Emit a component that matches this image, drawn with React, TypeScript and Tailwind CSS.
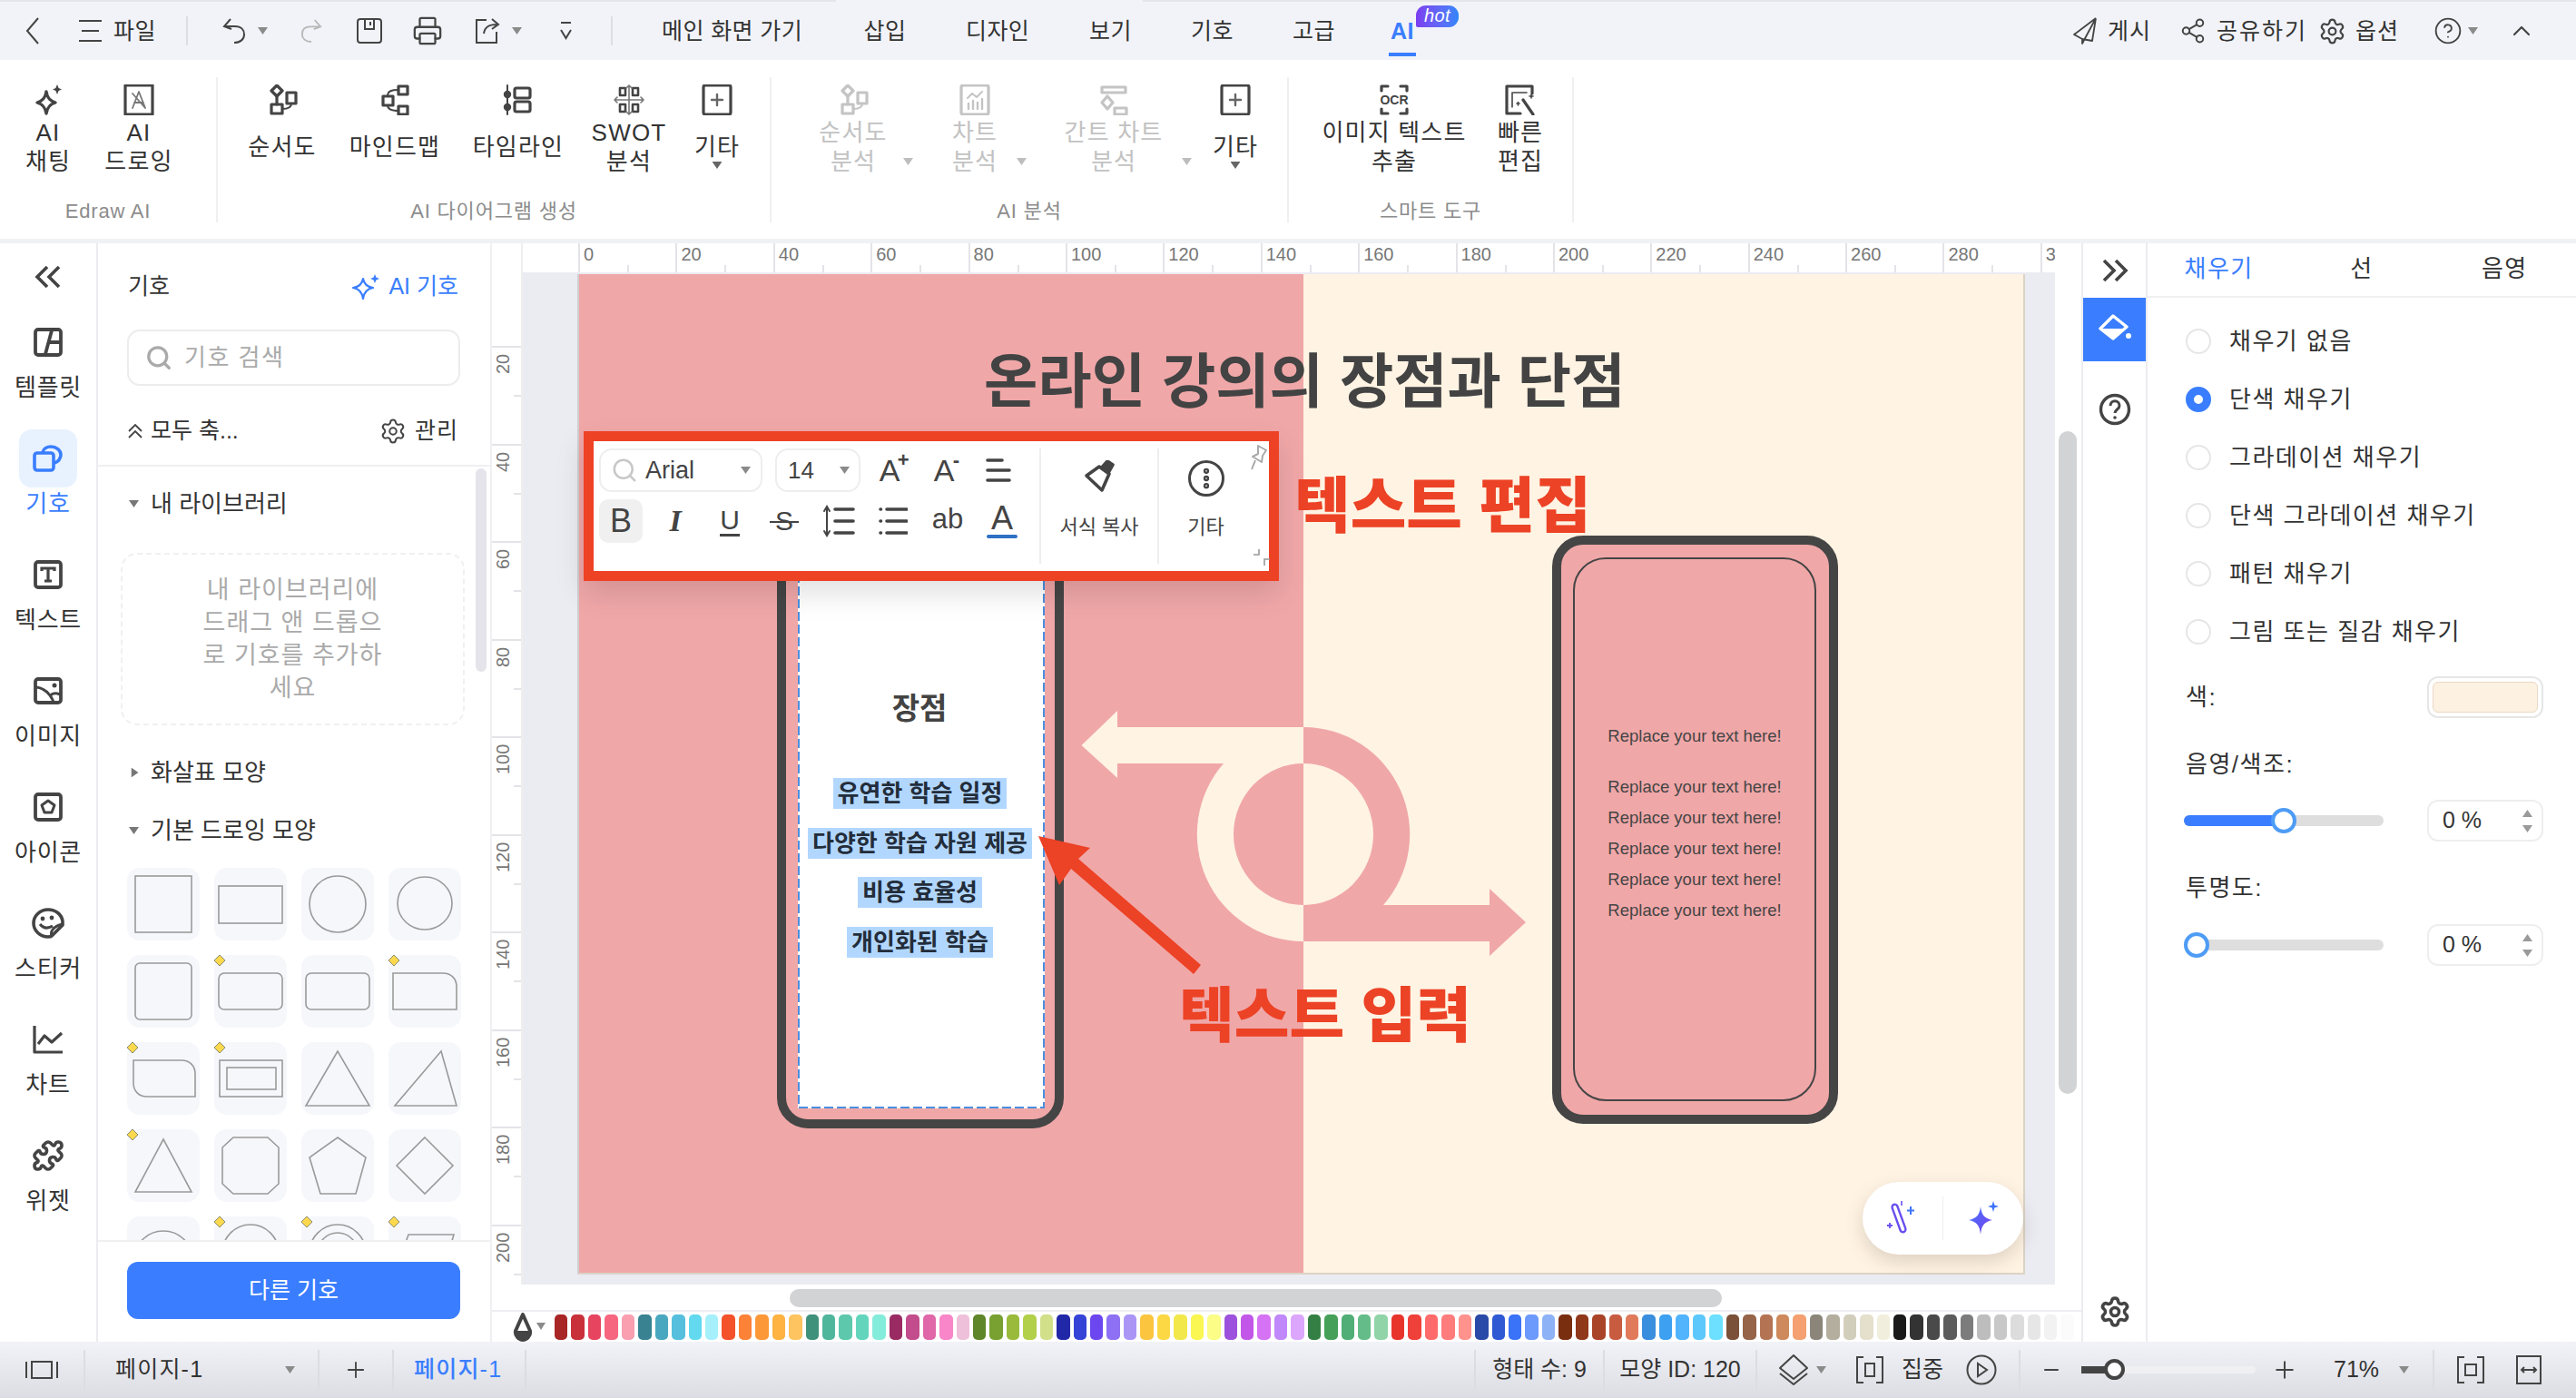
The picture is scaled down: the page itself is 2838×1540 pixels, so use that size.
import { Printer, Puzzle, Search, Settings, Share2, ChevronUp, Plus, Minus, CircleHelp, Ellipsis } from 'lucide-react'
import type { ReactNode } from 'react'

const INK = '#444444'
const GRAY = '#c4c4c4'

const swatches = [
  '#a92626', '#c9313a', '#e6445f', '#f7667f', '#f99fb0',
  '#388292', '#4aa7c0', '#56bfde', '#62d9ef', '#a6f0fb',
  '#f4522a', '#fb8236', '#fd9838', '#feb342', '#fec45f',
  '#40917c', '#4fb69c', '#5ec8ad', '#63d5bd', '#84ecda',
  '#9a2b62', '#c34c8c', '#e068a8', '#f986c8', '#efc0da',
  '#5f8629', '#78a132', '#9aba3c', '#b2d04a', '#d2e08a',
  '#2128a8', '#3544d6', '#6c46ee', '#8d70f3', '#ab96f6',
  '#fcc540', '#fcd844', '#f2e84c', '#faf652', '#fbfd86',
  '#9c52dc', '#c256e8', '#d672f4', '#c088fa', '#dca6fc',
  '#348044', '#46a058', '#50ae76', '#64bc88', '#90d4a8',
  '#e8352c', '#f0403a', '#ff6a6a', '#ff7c7c', '#ff928c',
  '#2a4aa8', '#2f5ad4', '#3a72f8', '#6c9afc', '#8eb2f6',
  '#7a2e10', '#90381a', '#aa4428', '#c85c40', '#e07a5a',
  '#3a8ede', '#3ea0f0', '#52b4fc', '#5cc8fc', '#6ce0fe',
  '#7a5038', '#966448', '#b47454', '#ce8a5c', '#f4a070',
  '#8c857a', '#b4ae9e', '#d2cebc', '#e4e0cc', '#f2eedd',
  '#1a1a1a', '#333333', '#4a4a4a', '#5c5c5c', '#7c7c7c', '#bdbdbd', '#c8c8c8', '#dcdcdc', '#e6e6e6', '#f2f2f2', '#fbfbfb',
]

function Caret({ className = '', color = '#8a8a8a' }: { className?: string; color?: string }) {
  return (
    <svg width="11" height="8" viewBox="0 0 11 8" className={className}>
      <path d="M0 0 H11 L5.5 8 Z" fill={color} />
    </svg>
  )
}

function Ico({ children, size = 34, className = '' }: { children: ReactNode; size?: number; className?: string }) {
  return (
    <svg width={size} height={size} viewBox="0 0 34 34" fill="none" stroke={INK} strokeWidth="3.2" strokeLinecap="round" strokeLinejoin="round" className={className}>
      {children}
    </svg>
  )
}

function FlowIcon({ color = INK }: { color?: string }) {
  return (
    <Ico>
      <g stroke={color}>
        <path d="M11 1 L17 7 L11 13 L5 7 Z" />
        <path d="M11 13 V22" />
        <rect x="5" y="22" width="12" height="10" />
        <rect x="22" y="9" width="10" height="12" />
        <path d="M27 21 C27 26 22 27 17 27" strokeWidth="2" />
      </g>
    </Ico>
  )
}

function RibbonItem({ className, icon, lines, off, caret, below }: { className: string; icon: ReactNode; lines: string[]; off?: boolean; caret?: string; below?: boolean }) {
  return (
    <div className={`${className} flex flex-col items-center`}>
      <div className="h-[33px] flex items-center justify-center">{icon}</div>
      <div className={`mt-[4px] h-[64px] flex flex-col items-center justify-center leading-[32px] text-[26px] tracking-[1.2px] whitespace-nowrap ${off ? 'text-[#c2c2c2]' : 'text-[#333]'}`}>
        {lines.map((l, i) => (
          <span key={l} className="relative">
            {l}
            {caret && i === lines.length - 1 && <Caret className={`absolute left-full top-[12px] ${caret}`} color="#bdbdbd" />}
            {below && <Caret className="absolute left-1/2 -translate-x-1/2 top-[32px]" color="#666" />}
          </span>
        ))}
      </div>
    </div>
  )
}

function RibbonGroup({ className, label, children }: { className: string; label: string; children: ReactNode }) {
  return (
    <div className={`${className} h-[160px] mt-[19px] pt-[8px] border-r-2 border-[#f0f0f2] flex flex-col`}>
      <div className="flex h-[101px]">{children}</div>
      <div className="mt-[27px] h-[24px] leading-[24px] text-center text-[22px] tracking-[0.8px] text-[#8c8c8c]">{label}</div>
    </div>
  )
}

function NavItem({ icon, label, active }: { icon: ReactNode; label: string; active?: boolean }) {
  return (
    <div className="h-[128px] flex flex-col items-center">
      <div className={`w-[64px] h-[64px] rounded-[14px] flex items-center justify-center ${active ? 'bg-[#e8f2ff]' : ''}`}>{icon}</div>
      <div className={`mt-[2px] leading-[32px] text-[26px] tracking-[0.8px] ${active ? 'text-[#3a7eff]' : 'text-[#333]'}`}>{label}</div>
    </div>
  )
}

function Tile({ children, diamond }: { children: ReactNode; diamond?: boolean }) {
  return (
    <div className="h-[80px] rounded-[14px] bg-[#f6f7fb]">
      <svg viewBox="0 0 80 80" width="80" height="80" fill="none" stroke="#9a9a9a" strokeWidth="1.6" className="overflow-visible">
        {children}
        {diamond && <path d="M6 0 L12 6 L6 12 L0 6 Z" fill="#fcd84f" stroke="#8c8c70" strokeWidth="1" />}
      </svg>
    </div>
  )
}

function Radio({ label, on }: { label: string; on?: boolean }) {
  return (
    <div className="h-[64px] flex items-center">
      <div className={`w-[28px] h-[28px] rounded-full bg-white ${on ? 'border-[9px] border-[#3a7eff]' : 'border-2 border-[#e6e6e6]'}`} />
      <span className="ml-[20px] text-[#333]">{label}</span>
    </div>
  )
}

function ValueBox() {
  return (
    <div className="w-[128px] h-[46px] rounded-[12px] border-2 border-[#eeeeee] flex items-center pl-[15px] pr-[10px] text-[25px] tracking-normal text-[#333]">
      <span>0 %</span>
      <div className="ml-auto flex flex-col gap-[9px]">
        <Caret className="rotate-180" color="#9a9a9a" />
        <Caret color="#9a9a9a" />
      </div>
    </div>
  )
}

function Sep() {
  return <div className="w-[2px] h-[44px] bg-[#dcdde2]" />
}

function TextTool({ children, active, className = '' }: { children: ReactNode; active?: boolean; className?: string }) {
  return (
    <div className={`w-[60px] h-[48px] flex items-center justify-center ${className}`}>
      <div className={`w-[48px] h-[48px] rounded-[10px] flex items-center justify-center ${active ? 'bg-[#f0f0f0]' : ''}`}>{children}</div>
    </div>
  )
}

export default function App() {
  const pink = 'bg-[#f0a7a8]'

  return (
    <div className="relative w-[2838px] h-[1540px] overflow-hidden flex flex-col bg-white text-[#333] [font-family:'Liberation_Sans','Noto_Sans_CJK_KR',sans-serif]">

      {/* window top edge */}
      <div className="h-[2px] flex bg-[#e3e5ea]">
        <div className="ml-[921px] w-[338px] bg-[#f2f3f8]" />
      </div>

      {/* title bar */}
      <div className="h-[64px] bg-[#f2f3f8] flex items-center text-[25px] tracking-[0.4px] whitespace-nowrap">
        <svg width="15" height="32" viewBox="0 0 15 32" fill="none" stroke={INK} strokeWidth="2" className="ml-[28px]"><path d="M14 2 L2 16 L14 30" /></svg>
        <svg width="25" height="26" viewBox="0 0 25 26" stroke={INK} strokeWidth="2" className="ml-[44px]"><path d="M0 2 H25 M3 13 H22 M0 24 H25" /></svg>
        <span className="ml-[13px] w-[47px] pt-[2px]">파일</span>
        <div className="ml-[33px] w-[2px] h-[32px] bg-[#dddde2]" />
        <svg width="26" height="30" viewBox="0 0 26 30" fill="none" stroke={INK} strokeWidth="2" className="ml-[38px]"><path d="M9 2 L2 10 L10 13 M2 10 H14 C21 10 24 14 24 19 C24 24 20 28 13 28" /></svg>
        <Caret className="ml-[13px]" />
        <svg width="24" height="30" viewBox="0 0 26 30" fill="none" stroke="#b8b8b8" strokeWidth="2" className="ml-[36px]"><path d="M17 2 L24 10 L16 13 M24 10 H12 C5 10 2 14 2 19 C2 24 6 28 13 28" /></svg>
        <svg width="28" height="30" viewBox="0 0 28 30" fill="none" stroke={INK} strokeWidth="2" className="ml-[38px]"><rect x="1" y="2" width="26" height="26" rx="3" /><path d="M9 2 V13 H19 V2" /><path d="M15 5 V9" /></svg>
        <Printer size={34} strokeWidth={1.6} color={INK} className="ml-[33px]" />
        <svg width="28" height="30" viewBox="0 0 28 30" fill="none" stroke={INK} strokeWidth="2" className="ml-[35px]"><path d="M13 3 H2 V28 H24 V16" /><path d="M10 18 C11 11 15 8 24 8 M19 2 L26 8 L19 13" /></svg>
        <Caret className="ml-[13px]" />
        <svg width="13" height="22" viewBox="0 0 13 22" fill="none" stroke={INK} strokeWidth="2" className="ml-[42px]"><path d="M1 2 H12 M1 10 L6.5 19 L12 10" /></svg>
        <div className="ml-[43px] w-[2px] h-[32px] bg-[#dddde2]" />
        <span className="ml-[54px] w-[155px] pt-[2px] text-center">메인 화면 가기</span>
        <span className="ml-[67px] w-[48px] pt-[2px] text-center">삽입</span>
        <span className="ml-[65px] w-[70px] pt-[2px] text-center">디자인</span>
        <span className="ml-[66px] w-[46px] pt-[2px] text-center">보기</span>
        <span className="ml-[66px] w-[46px] pt-[2px] text-center">기호</span>
        <span className="ml-[66px] w-[46px] pt-[2px] text-center">고급</span>
        <div className="ml-[62px] relative w-[26px] h-full flex items-center justify-center text-[#3a7eff] font-bold">
          <span className="pt-[2px]">AI</span>
          <div className="absolute left-[-2px] right-[-2px] bottom-[4px] h-[4px] bg-[#3a7eff]" />
          <div className="absolute left-[28px] top-[4px] w-[47px] h-[24px] rounded-t-[11px] rounded-br-[11px] rounded-bl-[2px] bg-linear-to-r from-[#7a3cf0] to-[#2f86fb] text-white text-[20px] leading-[23px] italic font-normal text-center">hot</div>
        </div>

        <div className="ml-auto flex items-center pr-[44px]">
          <svg width="27" height="32" viewBox="0 0 27 32" fill="none" stroke={INK} strokeWidth="1.8" strokeLinejoin="round"><path d="M25 2 L1 20 L10 25 M25 2 L10 30 V25 M25 2 L21 27 L10 25" /></svg>
          <span className="ml-[11px] w-[47px] pt-[2px] tracking-[1px]">게시</span>
          <Share2 size={30} strokeWidth={1.6} color={INK} className="ml-[32px]" />
          <span className="ml-[11px] w-[104px] pt-[2px] tracking-[2px]">공유하기</span>
          <Settings size={31} strokeWidth={1.7} color={INK} className="ml-[8px]" />
          <span className="ml-[10px] w-[46px] pt-[2px] tracking-[1px]">옵션</span>
          <CircleHelp size={32} strokeWidth={1.4} color={INK} className="ml-[40px]" />
          <Caret className="ml-[6px]" />
          <ChevronUp size={32} strokeWidth={1.6} color={INK} className="ml-[32px]" />
        </div>
      </div>

      {/* ribbon */}
      <div className="h-[197px] flex bg-white shrink-0">
        <RibbonGroup className="w-[240px]" label="Edraw AI">
          <div className="flex pl-[3px]">
            <RibbonItem className="w-[100px]" lines={['AI', '채팅']} icon={
              <Ico>
                <path d="M15 8 C16 15 19 18 25 20 C19 22 16 25 15 32 C14 25 11 22 5 20 C11 18 14 15 15 8 Z" strokeWidth="3.4" />
                <path d="M27 0 L28.6 4 L32 5.5 L28.6 7 L27 11 L25.4 7 L22 5.5 L25.4 4 Z" fill={INK} stroke="none" />
              </Ico>
            } />
            <RibbonItem className="w-[100px]" lines={['AI', '드로잉']} icon={
              <Ico>
                <rect x="2" y="1" width="30" height="32" strokeWidth="3.2" />
                <path d="M10 26 L17 8 L24 26 M12 20 H22 M10 10 L24 26" strokeWidth="1.8" stroke="#777" />
              </Ico>
            } />
          </div>
        </RibbonGroup>
        <RibbonGroup className="w-[610px]" label="AI 다이어그램 생성">
          <div className="flex pl-[9px]">
            <RibbonItem className="w-[124px]" lines={['순서도']} icon={<FlowIcon />} />
            <RibbonItem className="w-[124px]" lines={['마인드맵']} icon={
              <Ico>
                <rect x="4" y="13" width="11" height="10" />
                <rect x="21" y="2" width="10" height="9" />
                <rect x="21" y="24" width="10" height="9" />
                <path d="M9 13 C9 7 14 6 21 6 M9 23 C9 28 14 29 21 29" strokeWidth="2" />
              </Ico>
            } />
            <RibbonItem className="w-[148px]" lines={['타임라인']} icon={
              <Ico>
                <path d="M5 1 V33" strokeWidth="2" />
                <circle cx="5" cy="11" r="2.6" fill={INK} />
                <circle cx="5" cy="25" r="2.6" fill={INK} />
                <rect x="13" y="4" width="17" height="11" rx="2" />
                <rect x="13" y="19" width="17" height="11" rx="2" />
              </Ico>
            } />
            <RibbonItem className="w-[96px]" lines={['SWOT', '분석']} icon={
              <Ico>
                <rect x="7" y="4" width="6" height="8" strokeWidth="2.6" />
                <rect x="21" y="4" width="6" height="8" strokeWidth="2.6" />
                <rect x="7" y="22" width="6" height="8" strokeWidth="2.6" />
                <rect x="21" y="22" width="6" height="8" strokeWidth="2.6" />
                <path d="M1 17 H33 M17 1 V33 M4 14 L1 17 L4 20 M30 14 L33 17 L30 20 M14 4 L17 1 L20 4 M14 30 L17 33 L20 30" strokeWidth="1.6" stroke="#777" />
              </Ico>
            } />
            <RibbonItem className="w-[98px]" lines={['기타']} below icon={
              <Ico>
                <rect x="2" y="1" width="30" height="32" rx="2" />
                <path d="M17 11 V23 M11 17 H23" strokeWidth="2.4" stroke="#666" />
              </Ico>
            } />
          </div>
        </RibbonGroup>
        <RibbonGroup className="w-[570px]" label="AI 분석">
          <div className="flex pl-[23px]">
            <RibbonItem className="w-[134px]" off caret="ml-[30px]" lines={['순서도', '분석']} icon={<FlowIcon color={GRAY} />} />
            <RibbonItem className="w-[134px]" off caret="ml-[21px]" lines={['차트', '분석']} icon={
              <Ico>
                <g stroke={GRAY}>
                  <rect x="2" y="1" width="30" height="32" rx="2" />
                  <path d="M9 15 L14 10 L19 14 L25 8" strokeWidth="2" />
                  <path d="M10 27 V21 M15 27 V18 M20 27 V20 M25 27 V16" strokeWidth="2.4" />
                </g>
              </Ico>
            } />
            <RibbonItem className="w-[172px]" off caret="ml-[50px]" lines={['간트 차트', '분석']} icon={
              <Ico>
                <g stroke={GRAY}>
                  <path d="M4 9 V3 H30 V9 H4 Z" />
                  <path d="M10 13 L16 20 L10 27 L4 20 Z" />
                  <rect x="18" y="26" width="13" height="7" />
                </g>
              </Ico>
            } />
            <RibbonItem className="w-[96px]" lines={['기타']} below icon={
              <Ico>
                <rect x="2" y="1" width="30" height="32" rx="2" />
                <path d="M17 11 V23 M11 17 H23" strokeWidth="2.4" stroke="#666" />
              </Ico>
            } />
          </div>
        </RibbonGroup>
        <RibbonGroup className="w-[314px]" label="스마트 도구">
          <div className="flex pl-[9px]">
            <RibbonItem className="w-[214px]" lines={['이미지 텍스트', '추출']} icon={
              <Ico>
                <path d="M3 7 V2 H10 M24 2 H31 V7 M3 27 V32 H10 M24 32 H31 V27" />
                <text x="17" y="22" textAnchor="middle" fontSize="14" fontWeight="700" fill={INK} stroke="none" fontFamily="Liberation Sans">OCR</text>
              </Ico>
            } />
            <RibbonItem className="w-[64px]" lines={['빠른', '편집']} icon={
              <Ico>
                <path d="M30 10 V2 H2 V32 H17" />
                <path d="M9 9 H24 M8 9 V25" strokeWidth="1.6" />
                <path d="M20 17 L31 33" strokeWidth="3.2" />
                <path d="M13 21 L16 21 M14.5 19.5 V23 M27 13 H31 M29 11 V15" strokeWidth="1.6" />
              </Ico>
            } />
          </div>
        </RibbonGroup>
      </div>
      <div className="h-[5px] bg-[#f0f1f4] shrink-0" />

      {/* workspace */}
      <div className="flex-1 flex min-h-0">

        {/* left nav */}
        <div className="w-[108px] border-r-2 border-[#ececf0] shrink-0 flex flex-col items-center">
          <svg width="30" height="26" viewBox="0 0 30 26" fill="none" stroke={INK} strokeWidth="3.6" className="mt-[24px] mb-[27px]"><path d="M14 2 L3 13 L14 24 M27 2 L16 13 L27 24" /></svg>
          <div className="flex flex-col items-center">
            <NavItem label="템플릿" icon={
              <svg width="32" height="32" viewBox="0 0 32 32" fill="none" stroke={INK} strokeWidth="3.8"><rect x="2" y="2" width="28" height="28" rx="3" /><path d="M20 3 L13 29 M16 16 H29" /></svg>
            } />
            <NavItem active label="기호" icon={
              <svg width="33" height="30" viewBox="0 0 33 30" fill="none" stroke="#3a7eff" strokeWidth="3.6" strokeLinejoin="round"><rect x="2" y="9" width="21" height="19" rx="3" /><path d="M11 8 C12 4 16 2 20 2 C26 2 31 6 31 11 C31 15 28 19 24 20" /></svg>
            } />
            <NavItem label="텍스트" icon={
              <svg width="32" height="32" viewBox="0 0 32 32" fill="none" stroke={INK} strokeWidth="3.8"><rect x="2" y="2" width="28" height="28" rx="3" /><path d="M9 12 V9 H23 V12 M16 9 V23 M12 23 H20" strokeWidth="3.2" /></svg>
            } />
            <NavItem label="이미지" icon={
              <svg width="32" height="30" viewBox="0 0 32 30" fill="none" stroke={INK} strokeWidth="3.8"><rect x="2" y="2" width="28" height="26" rx="3" /><path d="M3 11 C12 12 18 18 22 27 M18 21 C20 18 24 17 29 19" strokeWidth="3" /><circle cx="23" cy="9" r="2.5" fill={INK} stroke="none" /></svg>
            } />
            <NavItem label="아이콘" icon={
              <svg width="32" height="32" viewBox="0 0 32 32" fill="none" stroke={INK} strokeWidth="3.8" strokeLinejoin="round"><rect x="2" y="2" width="28" height="28" rx="3" /><path d="M16 9 L23 14 L20 22 H12 L9 14 Z" strokeWidth="3" /></svg>
            } />
            <NavItem label="스티커" icon={
              <svg width="36" height="34" viewBox="0 0 36 34" fill="none" stroke={INK} strokeWidth="3.6" strokeLinejoin="round"><path d="M34 15 C33 7 26 2 18 2 C9 2 2 9 2 17 C2 25 9 32 18 32 C20 32 21 32 22 31 L34 19 Z" /><path d="M22 31 C20 26 24 20 34 18 M9 18 C13 23 18 23 23 20" strokeWidth="3" /><circle cx="12" cy="12" r="2.4" fill={INK} stroke="none" /><circle cx="22" cy="11" r="2.4" fill={INK} stroke="none" /></svg>
            } />
            <NavItem label="차트" icon={
              <svg width="34" height="32" viewBox="0 0 34 32" fill="none" stroke={INK} strokeWidth="3.2" strokeLinejoin="round"><path d="M2 1 V30 H33" /><path d="M6 21 L13 12 L21 19 L32 9" /></svg>
            } />
            <NavItem label="위젯" icon={<Puzzle size={36} strokeWidth={2.4} color={INK} />} />
          </div>
        </div>

        {/* symbol panel */}
        <div className="w-[434px] shrink-0 border-r-2 border-[#f0f0f2] flex flex-col">
          <div className="h-[92px] pt-[3px] pl-[33px] pr-[35px] flex items-center justify-between text-[25px]">
            <span>기호</span>
            <div className="flex items-center text-[#3a7eff]">
              <svg width="32" height="28" viewBox="0 0 32 28" fill="none" stroke="#3a7eff" strokeWidth="2.2" strokeLinejoin="round"><path d="M13 5 C14 11 17 14 24 15 C17 16 14 20 13 27 C12 20 9 16 2 15 C9 14 12 11 13 5 Z" /><path d="M26 0 L27.4 3.6 L31 5 L27.4 6.4 L26 10 L24.6 6.4 L21 5 L24.6 3.6 Z" fill="#3a7eff" stroke="none" /></svg>
              <span className="ml-[9px]">AI 기호</span>
            </div>
          </div>
          <div className="mt-[3px] ml-[32px] w-[367px] h-[62px] rounded-[14px] border-2 border-[#ececec] flex items-center pl-[18px] text-[26px] tracking-[1.5px] text-[#aaaaaa]">
            <Search size={30} strokeWidth={2.6} color="#aaaaaa" />
            <span className="ml-[13px]">기호 검색</span>
          </div>
          <div className="h-[89px] pt-[13px] pl-[33px] pr-[35px] flex items-center justify-between border-b-2 border-[#f0f0f2] text-[25px]">
            <div className="flex items-center">
              <svg width="16" height="16" viewBox="0 0 16 16" fill="none" stroke={INK} strokeWidth="1.8"><path d="M1 8 L8 1 L15 8 M1 15 L8 8 L15 15" /></svg>
              <span className="ml-[9px]">모두 축...</span>
            </div>
            <div className="flex items-center">
              <Settings size={30} strokeWidth={1.6} color={INK} />
              <span className="ml-[9px] tracking-[1px]">관리</span>
            </div>
          </div>

          <div className="relative flex-1 min-h-0 overflow-hidden text-[26px]">
            <div className="absolute left-[416px] top-[2px] w-[12px] h-[224px] rounded-full bg-[#e4e4ea]" />
            <div className="h-[82px] pl-[34px] flex items-center">
              <Caret color="#777" />
              <span className="ml-[13px]">내 라이브러리</span>
            </div>
            <div className="mt-[13px] ml-[25px] w-[379px] h-[190px] rounded-[18px] border-2 border-dashed border-[#f0f0f2] flex flex-col items-center justify-center text-[27px] tracking-[1px] leading-[36px] text-[#aaaaaa]">
              <span>내 라이브러리에</span>
              <span>드래그 앤 드롭으</span>
              <span>로 기호를 추가하</span>
              <span>세요</span>
            </div>
            <div className="mt-[36px] h-[32px] pl-[35px] flex items-center">
              <Caret color="#777" className="-rotate-90" />
              <span className="ml-[12px]">화살표 모양</span>
            </div>
            <div className="mt-[32px] h-[32px] pl-[34px] flex items-center">
              <Caret color="#777" />
              <span className="ml-[13px]">기본 드로잉 모양</span>
            </div>
            <div className="mt-[25px] pl-[32px] pr-[32px] grid grid-cols-4 gap-[16px]">
              <Tile><rect x="9" y="9" width="62" height="62" /></Tile>
              <Tile><rect x="5" y="20" width="70" height="41" /></Tile>
              <Tile><ellipse cx="40" cy="40" rx="31" ry="31" /></Tile>
              <Tile><ellipse cx="40" cy="39" rx="30" ry="29" /></Tile>
              <Tile><rect x="9" y="9" width="62" height="62" rx="5" /></Tile>
              <Tile diamond><rect x="5" y="20" width="70" height="40" rx="6" /></Tile>
              <Tile><rect x="5" y="20" width="70" height="40" rx="6" /></Tile>
              <Tile diamond><path d="M5 20 H60 C69 20 75 26 75 35 V60 H5 Z" /></Tile>
              <Tile diamond><path d="M7 20 H60 C69 20 75 26 75 35 V60 H22 C13 60 7 54 7 45 Z" /></Tile>
              <Tile diamond><rect x="6" y="20" width="69" height="40" /><rect x="14" y="28" width="54" height="24" /></Tile>
              <Tile><path d="M40 10 L5 70 H75 Z" /></Tile>
              <Tile><path d="M58 10 L7 70 H75 Z" /></Tile>
              <Tile diamond><path d="M40 11 L9 69 H71 Z" /></Tile>
              <Tile><path d="M21 9 H59 L71 20 V60 L59 71 H21 L9 60 V20 Z" /></Tile>
              <Tile><path d="M40 9 L71 31 L60 71 H21 L9 31 Z" /></Tile>
              <Tile><path d="M40 9 L71 40 L40 71 L9 40 Z" /></Tile>
              <Tile><ellipse cx="40" cy="45" rx="31" ry="29" /></Tile>
              <Tile diamond><ellipse cx="40" cy="40" rx="31" ry="31" /></Tile>
              <Tile diamond><circle cx="40" cy="40" r="31" /><circle cx="40" cy="40" r="22" /></Tile>
              <Tile diamond><path d="M22 20 H72 L60 60 H8 Z" /></Tile>
            </div>
          </div>

          <div className="h-[112px] pt-[22px] border-t-2 border-[#f0f0f2] shrink-0">
            <div className="ml-[32px] w-[367px] h-[63px] rounded-[12px] bg-[#3a7eff] text-white text-[25px] flex items-center justify-center">다른 기호</div>
          </div>
        </div>

        {/* center */}
        <div className="w-[1751px] shrink-0 flex flex-col">
          <div className="flex-1 min-h-0 flex">
            <div className="flex-1 min-w-0 flex flex-col">

              {/* top ruler */}
              <div className="h-[32px] shrink-0 flex overflow-hidden text-[20px] leading-[24px] text-[#777]">
                <div className="w-[34px] shrink-0 border-r-2 border-[#eeeeee]" />
                <div className="w-[61px] shrink-0" />
                {[0, 20, 40, 60, 80, 100, 120, 140, 160, 180, 200, 220, 240, 260, 280, 300].map((n) => (
                  <div key={n} className="relative w-[107.4px] shrink-0 h-full border-l-2 border-[#e4e4e8] pl-[4px]">
                    <span>{n === 300 ? '3' : n}</span>
                    <div className="absolute left-[52px] bottom-0 w-[2px] h-[8px] bg-[#e4e4e8]" />
                  </div>
                ))}
              </div>

              <div className="flex-1 min-h-0 flex">
                {/* left ruler */}
                <div className="w-[34px] shrink-0 overflow-hidden border-r-2 border-[#eeeeee] text-[20px] text-[#777]">
                  <div className="h-[83px] border-b-2 border-[#e4e4e8]" />
                  {[20, 40, 60, 80, 100, 120, 140, 160, 180, 200].map((n) => (
                    <div key={n} className="relative h-[107.5px] border-b-2 border-[#e4e4e8]">
                      <span className="absolute left-0 top-[7px] [writing-mode:vertical-rl] rotate-180 leading-[24px] h-[44px] text-right">{n}</span>
                      <div className="absolute right-0 top-[52px] w-[8px] h-[2px] bg-[#e4e4e8]" />
                    </div>
                  ))}
                </div>

                {/* canvas */}
                <div className="relative flex-1 min-w-0 bg-[#ebebf2] overflow-hidden">
                  <div className="absolute left-[60px] top-[2px] w-[1595px] h-[1102px] border-l-2 border-b-2 border-r-2 border-l-[#cfcfcf] border-b-[#dcd3c8] border-r-[#dcd3c8]">
                    <div className="relative w-[1591px] h-[1100px] flex">
                      <div className={`w-[798px] h-full ${pink}`} />
                      <div className="flex-1 h-full bg-[#fff3e3]" />

                      <div className="absolute left-[446px] top-[83px] leading-[72px] text-[64.5px] font-semibold text-[#434343] whitespace-nowrap">온라인 강의의 장점과 단점</div>

                      {/* left phone */}
                      <div className={`absolute left-[218px] top-[288px] w-[316px] h-[653px] rounded-[34px] border-[10px] border-[#454545] ${pink}`}>
                        <div className="absolute left-[13px] top-[15px] w-[272px] h-[606px] bg-white flex flex-col items-center">
                          <svg width="272" height="606" className="absolute left-0 top-0" fill="none" stroke="#4a8fe0" strokeWidth="2" strokeDasharray="10 4"><rect x="1" y="1" width="270" height="604" /></svg>
                          <div className="mt-[146px] -ml-[4px] h-[40px] leading-[40px] text-[33px] font-bold text-[#434343]">장점</div>
                          <div className="mt-[56px] -ml-[3px] flex flex-col items-center gap-[20.7px] text-[26px] font-bold leading-[34px] text-[#232d3a] whitespace-nowrap">
                            <span className="bg-[#b2d7ff] px-[5px]">유연한 학습 일정</span>
                            <span className="bg-[#b2d7ff] px-[5px]">다양한 학습 자원 제공</span>
                            <span className="bg-[#b2d7ff] px-[5px]">비용 효율성</span>
                            <span className="bg-[#b2d7ff] px-[5px]">개인화된 학습</span>
                          </div>
                        </div>
                      </div>

                      {/* right phone */}
                      <div className={`absolute left-[1072px] top-[288px] w-[315px] h-[648px] rounded-[34px] border-[10px] border-[#454545] ${pink}`}>
                        <div className="absolute left-[13px] top-[14px] w-[268px] h-[599px] rounded-[36px] border-2 border-[#454545] flex flex-col items-center text-[18.5px] leading-[34px] text-[#454545] whitespace-nowrap">
                          <span className="mt-[178px] mb-[22px]">Replace your text here!</span>
                          <span>Replace your text here!</span>
                          <span>Replace your text here!</span>
                          <span>Replace your text here!</span>
                          <span>Replace your text here!</span>
                          <span>Replace your text here!</span>
                        </div>
                      </div>

                      {/* loop arrow and pointer */}
                      <svg viewBox="638 302 1591 1100" className="absolute left-0 top-0 w-[1591px] h-[1100px] pointer-events-none">
                        <path d="M1191.5 821 L1231 783 V801 H1436 V841 A77 78 0 0 0 1436 997 V1037 A117 118 0 0 1 1348 841 H1231 V857 Z" fill="#fff3e3" />
                        <path d="M1436 801 A117 118 0 0 1 1524 997 H1641 V979 L1681 1016 L1641 1053 V1037 H1436 V997 A77 78 0 0 0 1436 841 Z" fill="#f0a7a8" />
                        <path d="M1144 921 L1201 934 L1188 946 L1323 1063 L1315 1073 L1180 957 L1167 975 Z" fill="#ec4225" />
                      </svg>

                      <div className="absolute left-[661px] top-[781px] leading-[72px] text-[66px] font-black text-[#ec4225] whitespace-nowrap">텍스트 입력</div>
                      <div className="absolute left-[788px] top-[220px] leading-[72px] text-[67px] font-black text-[#ec4225] whitespace-nowrap">텍스트 편집</div>

                      {/* floating text toolbar */}
                      <div className="absolute left-[5px] top-[173px] w-[766px] h-[165px] border-[11px] border-[#ee4225] bg-white shadow-[0_14px_30px_rgba(0,0,0,0.12)] flex text-[#444]">
                        <div className="w-[491px] pl-[6px] pt-[8px] flex flex-col gap-[8px]">
                          <div className="flex h-[48px]">
                            <div className="w-[180px] h-[48px] rounded-[14px] border-2 border-[#eeeeee] flex items-center pl-[11px] pr-[11px] text-[27px]">
                              <Search size={30} strokeWidth={2} color="#c8c8c8" />
                              <span className="ml-[8px]">Arial</span>
                              <Caret className="ml-auto" />
                            </div>
                            <div className="ml-[14px] w-[94px] h-[48px] rounded-[14px] border-2 border-[#eeeeee] flex items-center pl-[12px] pr-[10px] text-[26px]">
                              <span>14</span>
                              <Caret className="ml-auto" />
                            </div>
                            <div className="ml-[2px] w-[60px] h-[48px] flex items-center justify-center">
                              <span className="relative text-[34px] font-medium leading-none">A<span className="absolute left-[20px] top-[-5px] text-[22px] font-bold">+</span></span>
                            </div>
                            <div className="w-[60px] h-[48px] flex items-center justify-center">
                              <span className="relative text-[34px] font-medium leading-none">A<span className="absolute left-[21px] top-[-5px] text-[22px] font-bold">-</span></span>
                            </div>
                            <div className="w-[60px] h-[48px] flex items-center justify-center">
                              <svg width="28" height="28" viewBox="0 0 28 28" stroke={INK} strokeWidth="3.6" strokeLinecap="round"><path d="M2 3 H18 M2 14 H26 M2 25 H26" /></svg>
                            </div>
                          </div>
                          <div className="flex h-[48px] -ml-[6px]">
                            <TextTool active><span className="text-[36px] font-medium leading-none">B</span></TextTool>
                            <TextTool><span className="text-[34px] font-bold italic leading-none [font-family:'Liberation_Serif',serif]">I</span></TextTool>
                            <TextTool><span className="text-[30px] font-medium leading-[30px] border-b-[3px] border-[#444]">U</span></TextTool>
                            <TextTool><span className="relative text-[30px] font-medium leading-none">S<span className="absolute left-[-6px] right-[-6px] top-[15px] h-[2px] bg-[#444]" /></span></TextTool>
                            <TextTool>
                              <svg width="36" height="40" viewBox="0 0 36 40" fill="none" stroke={INK} strokeWidth="3.6" strokeLinecap="round"><path d="M14 7 H34 M14 20 H34 M14 33 H34" /><path d="M5 5 V35 M2 9 L5 4 L8 9 M2 31 L5 36 L8 31" strokeWidth="2" /></svg>
                            </TextTool>
                            <TextTool>
                              <svg width="32" height="36" viewBox="0 0 32 36" fill="none" stroke={INK} strokeWidth="3.6" strokeLinecap="round"><path d="M9 5 H31 M9 18 H31 M9 31 H31 M2 5 H2.5 M2 18 H2.5 M2 31 H2.5" /></svg>
                            </TextTool>
                            <TextTool><span className="text-[31px] font-medium leading-none -mt-[6px]">ab</span></TextTool>
                            <TextTool>
                              <div className="flex flex-col items-center">
                                <span className="text-[36px] leading-[32px]">A</span>
                                <div className="w-[34px] h-[4px] rounded-full bg-[#2f6fc4] mt-[2px]" />
                              </div>
                            </TextTool>
                          </div>
                        </div>
                        <div className="w-[2px] mt-[8px] mb-[8px] bg-[#eeeeee]" />
                        <div className="w-[128px] flex flex-col items-center">
                          <svg width="36" height="36" viewBox="0 0 36 36" fill="none" stroke={INK} strokeWidth="3.6" strokeLinejoin="round" className="mt-[21px]"><path d="M4 17 L18 7 L29 15 L21 33 Z" /><path d="M20 9 L27 1 L33 5 L28 14" fill={INK} /></svg>
                          <span className="mt-[24px] text-[22px] leading-[28px]">서식 복사</span>
                        </div>
                        <div className="w-[2px] mt-[8px] mb-[8px] bg-[#eeeeee]" />
                        <div className="w-[103px] flex flex-col items-center">
                          <div className="mt-[21px] w-[40px] h-[40px] rounded-full border-[3px] border-[#444] flex items-center justify-center">
                            <Ellipsis size={28} strokeWidth={3.4} color={INK} className="rotate-90" />
                          </div>
                          <span className="mt-[20px] text-[22px] leading-[28px]">기타</span>
                        </div>
                        <svg width="20" height="30" viewBox="0 0 20 30" fill="none" stroke="#aaaaaa" strokeWidth="2" strokeLinejoin="round" className="absolute left-[723px] top-[3px]"><path d="M9 2 L18 7 L14 13 L13 20 L3 14 L9 11 Z M6 18 L2 28" /></svg>
                        <svg width="20" height="20" viewBox="0 0 20 20" fill="none" stroke="#999" strokeWidth="1.6" className="absolute left-[726px] top-[118px]"><path d="M7 1 V7 H1 M19 12 H13 V19" /></svg>
                      </div>

                      {/* AI quick buttons */}
                      <div className="absolute left-[1414px] top-[1000px] w-[177px] h-[80px] rounded-[40px] bg-white shadow-[0_8px_20px_rgba(90,80,70,0.2)] flex items-center">
                        <div className="w-[88px] flex justify-center">
                          <svg width="36" height="38" viewBox="0 0 36 38" fill="none" stroke="#6a4ff0" strokeWidth="2.4"><rect x="11" y="3" width="6" height="32" rx="3" transform="rotate(-20 14 19)" /><path d="M27 6 V15 M23 10.5 H31" stroke="#3f74fb" strokeWidth="2" /><path d="M4 24 V30 M1 27 H7" strokeWidth="1.8" /><path d="M17 0 V5" strokeWidth="1.6" /></svg>
                        </div>
                        <div className="w-[1px] h-[48px] bg-[#eeeeee]" />
                        <div className="flex-1 flex justify-center">
                          <svg width="36" height="38" viewBox="0 0 36 38"><defs><linearGradient id="st" x1="0" y1="0" x2="1" y2="1"><stop offset="0" stopColor="#3f74fb" /><stop offset="1" stopColor="#8040f0" /></linearGradient></defs><path d="M15 6 C16 15 19 19 28 21 C19 23 16 27 15 37 C14 27 11 23 2 21 C11 19 14 15 15 6 Z" fill="url(#st)" /><path d="M29 0 L30.4 4.6 L35 6 L30.4 7.4 L29 12 L27.6 7.4 L23 6 L27.6 4.6 Z" fill="#3f74fb" /></svg>
                        </div>
                      </div>
                    </div>
                  </div>
                </div>
              </div>
            </div>

            {/* vertical scrollbar */}
            <div className="w-[29px] shrink-0 bg-white pl-[4px] pt-[207px]">
              <div className="w-[20px] h-[730px] rounded-full bg-[#d2d3d5]" />
            </div>
          </div>

          {/* horizontal scrollbar */}
          <div className="h-[30px] shrink-0 pl-[328px] pt-[5px] border-b-2 border-[#eeeef2]">
            <div className="w-[1027px] h-[20px] rounded-full bg-[#d2d3d5]" />
          </div>

          {/* colour strip */}
          <div className="h-[33px] shrink-0 flex items-center overflow-hidden">
            <svg width="38" height="32" viewBox="0 0 38 32" className="ml-[23px] shrink-0">
              <path d="M11 2 L19 20 C20 26 15 30 11 30 C7 30 2 26 3 20 Z" fill="none" stroke="#444" strokeWidth="4" strokeLinejoin="round" />
              <path d="M3 20 H19 C20 26 15 30 11 30 C7 30 2 26 3 20 Z" fill="#444" />
              <path d="M26 11 H36 L31 19 Z" fill="#8a8a8a" />
            </svg>
            <div className="ml-[8px] flex gap-[4px]">
              {swatches.map((c, i) => (
                <div key={i} className="w-[14.44px] h-[28px] shrink-0 rounded-[5px]" style={{ backgroundColor: c }} />
              ))}
            </div>
          </div>
        </div>

        {/* right icon strip */}
        <div className="w-[73px] shrink-0 border-l-2 border-r-2 border-[#ececf0] flex flex-col items-center">
          <div className="h-[60px] flex items-center">
            <svg width="30" height="26" viewBox="0 0 30 26" fill="none" stroke={INK} strokeWidth="3.6"><path d="M3 2 L14 13 L3 24 M16 2 L27 13 L16 24" /></svg>
          </div>
          <div className="w-full h-[70px] bg-[#3a7eff] flex items-center justify-center">
            <svg width="36" height="40" viewBox="0 0 36 40"><path d="M16 5 L31 17 L16 30 L2 19 Z" fill="none" stroke="#fff" strokeWidth="3.4" strokeLinejoin="round" /><path d="M3 19 H30 L16 30 Z" fill="#fff" /><circle cx="33" cy="27" r="3" fill="#fff" /></svg>
          </div>
          <svg width="36" height="36" viewBox="0 0 36 36" fill="none" stroke={INK} strokeWidth="3.4" className="mt-[35px]"><circle cx="18" cy="18" r="15.5" /><path d="M13 14 C13 7 23 7 23 14 C23 18 18 18 18 22" strokeWidth="3" /><circle cx="18" cy="27" r="1.8" fill={INK} stroke="none" /></svg>
          <Settings size={36} strokeWidth={2.4} color={INK} className="mt-auto mb-[15px]" />
        </div>

        {/* right panel */}
        <div className="flex-1 min-w-0 flex flex-col text-[26px] tracking-[1.5px]">
          <div className="h-[60px] pb-[2px] shrink-0 grid grid-cols-3 items-center text-center border-b-2 border-[#f0f0f2]">
            <span className="text-[#3a7eff]">채우기</span>
            <span>선</span>
            <span>음영</span>
          </div>
          <div className="mt-[16px] pl-[42px]">
            <Radio label="채우기 없음" />
            <Radio on label="단색 채우기" />
            <Radio label="그라데이션 채우기" />
            <Radio label="단색 그라데이션 채우기" />
            <Radio label="패턴 채우기" />
            <Radio label="그림 또는 질감 채우기" />
          </div>
          <div className="mt-[17px] pl-[42px] pr-[36px] flex items-center justify-between h-[46px]">
            <span>색:</span>
            <div className="w-[128px] h-[46px] rounded-[12px] border-2 border-[#e6e6e6] p-[4px]">
              <div className="w-full h-full rounded-[6px] bg-[#fdf1e1] border border-[#ead9c5]" />
            </div>
          </div>
          <div className="mt-[33px] pl-[42px] h-[36px] leading-[36px]">음영/색조:</div>
          <div className="mt-[21px] pl-[40px] pr-[36px] flex items-center justify-between h-[46px]">
            <div className="relative w-[220px] h-[12px] rounded-full bg-[#dedede]">
              <div className="w-[110px] h-full rounded-full bg-[#3a7eff]" />
              <div className="absolute left-[96px] top-[-8px] w-[28px] h-[28px] rounded-full border-[4px] border-[#4e9cf5] bg-white" />
            </div>
            <ValueBox />
          </div>
          <div className="mt-[33px] pl-[42px] h-[36px] leading-[36px]">투명도:</div>
          <div className="mt-[22px] pl-[40px] pr-[36px] flex items-center justify-between h-[46px]">
            <div className="relative w-[220px] h-[12px] rounded-full bg-[#dedede]">
              <div className="absolute left-0 top-[-8px] w-[28px] h-[28px] rounded-full border-[4px] border-[#4e9cf5] bg-white" />
            </div>
            <ValueBox />
          </div>
        </div>
      </div>

      {/* status bar */}
      <div className="h-[62px] shrink-0 bg-linear-to-b from-[#f2f3f8] to-[#dcdde2] flex items-center text-[25px] whitespace-nowrap">
        <div className="w-[92px] flex justify-center">
          <svg width="36" height="22" viewBox="0 0 36 22" fill="none" stroke={INK} strokeWidth="2"><path d="M1 2 V20 M35 2 V20" /><rect x="7" y="2" width="22" height="18" /></svg>
        </div>
        <Sep />
        <div className="w-[256px] pl-[33px] pr-[25px] flex items-center">
          <span className="tracking-[1.2px]">페이지-1</span>
          <Caret className="ml-auto" />
        </div>
        <Sep />
        <div className="w-[80px] flex justify-center"><Plus size={28} strokeWidth={1.6} color={INK} /></div>
        <Sep />
        <div className="w-[144px] pl-[22px] text-[#3a7eff] font-medium tracking-[1.2px]">페이지-1</div>
        <Sep />
        <div className="ml-auto" />
        <Sep />
        <div className="w-[140px] text-center">형태 수: 9</div>
        <Sep />
        <div className="w-[166px] text-center">모양 ID: 120</div>
        <Sep />
        <div className="w-[288px] pl-[22px] flex items-center">
          <svg width="36" height="36" viewBox="0 0 36 36" fill="none" stroke={INK} strokeWidth="2" strokeLinejoin="round"><path d="M18 2 L33 16 L18 28 L3 16 Z" /><path d="M3 22 L18 34 L33 22" /></svg>
          <Caret className="ml-[7px]" />
          <svg width="30" height="30" viewBox="0 0 30 30" fill="none" stroke={INK} strokeWidth="2" className="ml-[33px]"><path d="M8 1 H1 V29 H8 M22 1 H29 V29 H22" /><rect x="10" y="8" width="10" height="14" /></svg>
          <span className="ml-[20px]">집중</span>
          <svg width="34" height="34" viewBox="0 0 34 34" fill="none" stroke={INK} strokeWidth="2" className="ml-[25px]"><circle cx="17" cy="17" r="15.5" /><path d="M13 10 L23 17 L13 24 Z" /></svg>
        </div>
        <Sep />
        <div className="w-[454px] pl-[22px] flex items-center">
          <Minus size={24} strokeWidth={2} color={INK} />
          <div className="relative ml-[21px] w-[192px] h-[8px] rounded-full bg-[#f0f0f2]">
            <div className="w-[36px] h-full bg-[#444]" />
            <div className="absolute left-[25px] top-[-8px] w-[23px] h-[23px] rounded-full border-[4px] border-[#444] bg-white" />
          </div>
          <Plus size={30} strokeWidth={1.6} color={INK} className="ml-[17px]" />
          <span className="ml-[39px]">71%</span>
          <Caret className="ml-[22px]" />
        </div>
        <Sep />
        <div className="w-[156px] pl-[25px] flex items-center">
          <svg width="30" height="30" viewBox="0 0 30 30" fill="none" stroke={INK} strokeWidth="2"><path d="M8 1 H1 V29 H8 M22 1 H29 V29 H22" /><rect x="9" y="9" width="12" height="12" /></svg>
          <svg width="28" height="32" viewBox="0 0 28 32" fill="none" stroke={INK} strokeWidth="2" className="ml-[35px]"><rect x="1" y="1" width="26" height="30" /><path d="M6 16 H22 M9 13 L6 16 L9 19 M19 13 L22 16 L19 19" /></svg>
        </div>
      </div>
    </div>
  )
}
